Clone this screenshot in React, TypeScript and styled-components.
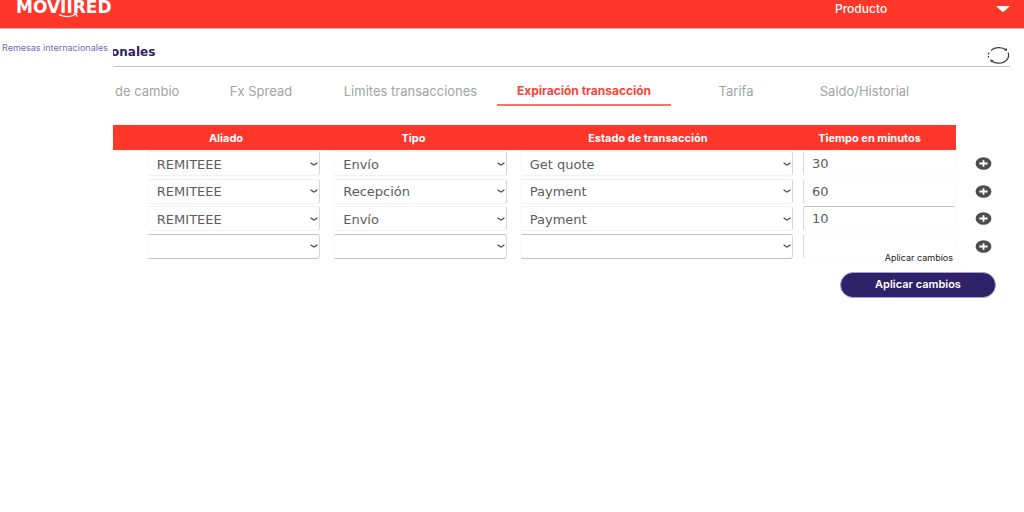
import React, { useState } from "react";
import styled, { createGlobalStyle, css } from "styled-components";

const colors = {
  red: "#ff372b",
  navy: "#2d2268",
  text: "#5c5c5c",
  muted: "#a3a3a3",
  line: "#d6d6d6",
  faint: "#f1f1f1",
};

const wide = `"DejaVu Sans", Verdana, sans-serif`;
const body = `Inter, "Liberation Sans", sans-serif`;

const GlobalStyle = createGlobalStyle`
  *, *::before, *::after { box-sizing: border-box; }
  body { margin: 0; background: #fff; color: ${colors.text}; font-family: ${body}; }
  button, input, select { font: inherit; color: inherit; }
`;

const TopBar = styled.header`
  display: flex;
  align-items: flex-start;
  justify-content: space-between;
  height: 28px;
  padding: 0 14px 0 16px;
  background: ${colors.red};
  box-shadow: 0 1px 0 #d9b3a6;
  color: #fff;
`;

const Logo = styled.a`
  display: block;
  line-height: 0;
`;

const ProductButton = styled.button`
  display: flex;
  align-items: center;
  justify-content: space-between;
  width: 175px;
  height: 18px;
  padding: 0;
  border: 0;
  background: none;
  color: #fff;
  font: 500 12px/18px ${body};
`;

const Page = styled.div`
  display: flex;
`;

const Sidebar = styled.nav`
  flex: 0 0 113px;
  padding: 14px 0 0 2px;
`;

const SideLink = styled.a`
  display: block;
  color: #7468b8;
  font: 9px/12px ${body};
  text-decoration: none;
  white-space: nowrap;
`;

const Main = styled.main`
  flex: 1;
  min-width: 0;
  padding-right: 14px;
  overflow: hidden;
`;

const TitleRow = styled.div`
  display: flex;
  align-items: flex-end;
  justify-content: space-between;
  height: 39px;
  border-bottom: 1px solid #c4c4c4;
`;

const Title = styled.h1`
  margin: 0 0 6px -2px;
  color: ${colors.navy};
  font: 700 12px/16px ${wide};
`;

const IconButton = styled.button`
  display: block;
  padding: 0;
  border: 0;
  background: none;
  line-height: 0;
`;

const Tabs = styled.div`
  display: grid;
  grid-template-columns: 85fr 126fr 173fr 174fr 130fr 127fr 82fr;
  padding-top: 8px;
`;

const Tab = styled.button<{ $active?: boolean; $cut?: boolean }>`
  height: 31px;
  padding: 2px 0 0;
  border: 0;
  border-bottom: 2px solid transparent;
  background: none;
  color: ${colors.muted};
  font: 400 13px/26px ${body};
  white-space: nowrap;
  ${(p) => p.$cut && css`padding-left: 2px; text-align: left;`}
  ${(p) => p.$active && css`
    border-bottom-color: #fa7264;
    color: #f4453c;
    font-size: 12px;
    font-weight: 700;
  `}
`;

const Table = styled.table`
  width: 100%;
  height: 135px;
  margin-top: 19px;
  border-collapse: collapse;
  table-layout: fixed;
`;

const Col = styled.col<{ $share: number }>`
  width: ${(p) => p.$share}%;
`;

const HeadCell = styled.th<{ $end?: number }>`
  height: 25px;
  padding: 0 ${(p) => p.$end ?? 0}px 0 0;
  background: ${colors.red};
  color: #fff;
  font: 700 11px/24px ${body};
`;

const EmptyCell = styled.td`
  padding: 0;
`;

const HeadGap = styled(EmptyCell)<{ $filled?: boolean }>`
  background: ${(p) => (p.$filled ? colors.red : "transparent")};
`;

const Cell = styled.td<{ $start: number }>`
  padding: 0 0 0 ${(p) => p.$start}px;
  vertical-align: middle;
`;

const ActionCell = styled.td`
  padding: 0 0 0 19px;
  vertical-align: middle;
`;

const SelectWrap = styled.div`
  display: grid;
  align-items: center;
  > * { grid-area: 1 / 1; }
  > svg { justify-self: end; margin-right: 2px; pointer-events: none; }
`;

const Select = styled.select<{ $strong?: boolean }>`
  appearance: none;
  width: 100%;
  height: 25px;
  padding: 2px 20px 0 9px;
  border: 1px solid ${(p) => (p.$strong ? "#c2c2c2" : colors.faint)};
  border-left-color: #fafafa;
  border-right-color: ${colors.line};
  border-radius: 3px;
  outline: none;
  background: #fff;
  font: 13px/16px ${wide};
`;

const Minutes = styled.input<{ $strong?: boolean }>`
  display: block;
  width: 100%;
  height: 25px;
  padding: 0 8px;
  border: 1px solid #fafafa;
  border-top-color: ${(p) => (p.$strong ? "#c2c2c2" : "#fafafa")};
  border-left-color: ${colors.line};
  border-radius: 3px;
  outline: none;
  font: 13px/16px ${wide};
`;

const Footer = styled.div`
  position: relative;
  display: flex;
  justify-content: flex-end;
  padding: 12px 14px 0 0;
`;

const Tooltip = styled.span`
  position: absolute;
  right: 48px;
  bottom: 33px;
  padding: 0 9px;
  background: #fff;
  color: #222;
  font: 9px/14px ${body};
`;

const ApplyButton = styled.button`
  width: 156px;
  height: 26px;
  padding: 0 0 2px;
  border: 1px solid #a79fe0;
  border-radius: 13px;
  background: ${colors.navy};
  color: #fff;
  font: 600 11px/22px ${body};
`;

const tabs = ["de cambio", "Fx Spread", "Limites transacciones", "Expiración transacción", "Tarifa", "Saldo/Historial"];

const rows = [
  { ally: "REMITEEE", type: "Envío", state: "Get quote", minutes: "30" },
  { ally: "REMITEEE", type: "Recepción", state: "Payment", minutes: "60" },
  { ally: "REMITEEE", type: "Envío", state: "Payment", minutes: "10" },
  { ally: "", type: "", state: "", minutes: "" },
];

function Field({ label, value, options, strong }: { label: string; value: string; options: string[]; strong: boolean }) {
  return (
    <SelectWrap>
      <Select aria-label={label} defaultValue={value} $strong={strong}>
        <option value="" />
        {options.map((o) => <option key={o}>{o}</option>)}
      </Select>
      <svg width="8" height="4" viewBox="0 0 8 4" aria-hidden="true">
        <path d="M.6.7L3.300 2.700Q4 3.100 4.700 2.700L7.400.7" fill="none" stroke="#444" strokeWidth="1.200" />
      </svg>
    </SelectWrap>
  );
}

function PlusIcon() {
  return (
    <svg width="17" height="13" viewBox="0 0 17 13" aria-hidden="true">
      <ellipse cx="8.5" cy="6.5" rx="7.9" ry="6.3" fill="#4d4d4d" />
      <path d="M4.4 6.5h8.2M8.5 3.3v6.4" stroke="#fff" strokeWidth="1.8" />
    </svg>
  );
}

export default function App() {
  const [active, setActive] = useState(3);
  return (
    <>
      <GlobalStyle />
      <TopBar>
        <Logo href="#" aria-label="Moviired">
          <svg width="98" height="20" viewBox="0 0 98 20">
            <text x="0" y="13" fill="#fff" fontFamily="DejaVu Sans, sans-serif" fontWeight="700" fontSize="17">MOVIIRED</text>
            <path d="M43 14.6q9 4.2 17-.4M57.6 13.6l2.800.400.8 2.800" fill="none" stroke="#fff" strokeWidth="1.200" />
          </svg>
        </Logo>
        <ProductButton>
          Producto
          <svg width="14" height="6" viewBox="0 0 14 6" aria-hidden="true">
            <path d="M0 0h14L8 5.6q-1 .6-2 0Z" fill="#fff" />
          </svg>
        </ProductButton>
      </TopBar>
      <Page>
        <Sidebar>
          <SideLink href="#">Remesas internacionales</SideLink>
        </Sidebar>
        <Main>
          <TitleRow>
            <Title>onales</Title>
            <IconButton aria-label="Actualizar">
              <svg width="23" height="20" viewBox="0 0 23 20">
                <g fill="none" stroke="#3a3a3a" strokeWidth="1.2">
                  <path d="M4 4.600Q7 1.600 12 1.600q4.600 0 7.200 2.400" />
                  <path d="M21 6.500q1.400 3.400-.4 6.300Q17.600 17.200 11.500 17.200q-4.200 0-7.200-2.400" />
                  <path d="M2 6.500Q.8 9 1.600 11.500" strokeDasharray="2 1.500" />
                </g>
                <path d="M16.800 4.200l3.400.5-.6-2.800ZM6.600 14.200l-3.400-.6.8 3Z" fill="#3a3a3a" />
              </svg>
            </IconButton>
          </TitleRow>
          <Tabs role="tablist">
            {tabs.map((t, i) => (
              <Tab key={t} role="tab" aria-selected={i === active} $active={i === active} $cut={i === 0} onClick={() => setActive(i)}>
                {t}
              </Tab>
            ))}
          </Tabs>
          <Table>
            <colgroup>
              {[2.1, 21, 20.8, 31.9, 18.2, 6].map((s, i) => <Col key={i} $share={s} />)}
            </colgroup>
            <thead>
              <tr>
                <HeadGap $filled />
                <HeadCell>Aliado</HeadCell>
                <HeadCell>Tipo</HeadCell>
                <HeadCell $end={4}>Estado de transacción</HeadCell>
                <HeadCell $end={10}>Tiempo en minutos</HeadCell>
                <HeadGap />
              </tr>
            </thead>
            <tbody>
              {rows.map((r, i) => (
                <tr key={i}>
                  <EmptyCell />
                  <Cell $start={15}><Field label="Aliado" value={r.ally} options={["REMITEEE"]} strong={i === 3} /></Cell>
                  <Cell $start={13}><Field label="Tipo" value={r.type} options={["Envío", "Recepción"]} strong={i === 3} /></Cell>
                  <Cell $start={13}><Field label="Estado de transacción" value={r.state} options={["Get quote", "Payment"]} strong={i === 3} /></Cell>
                  <Cell $start={10}><Minutes aria-label="Tiempo en minutos" defaultValue={r.minutes} $strong={i === 2} /></Cell>
                  <ActionCell><IconButton aria-label="Agregar"><PlusIcon /></IconButton></ActionCell>
                </tr>
              ))}
            </tbody>
          </Table>
          <Footer>
            <Tooltip role="tooltip">Aplicar cambios</Tooltip>
            <ApplyButton>Aplicar cambios</ApplyButton>
          </Footer>
        </Main>
      </Page>
    </>
  );
}
